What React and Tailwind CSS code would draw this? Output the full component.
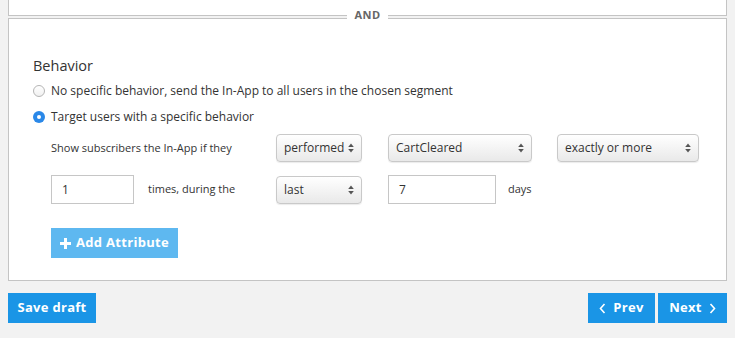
import React from "react";

const Arrows = () => (
  <svg width="6" height="10" viewBox="0 0 6 10" className="shrink-0">
    <polygon points="3,0.5 5.8,4 0.2,4" fill="#555" />
    <polygon points="0.2,6 5.8,6 3,9.5" fill="#555" />
  </svg>
);

const Select = ({ value, className }) => (
  <div
    className={`flex items-center justify-between h-[28px] pl-[7px] pr-[7px] rounded-[4px] border border-[#c9c9c9] bg-gradient-to-b from-[#ffffff] to-[#e9e9e9] shadow-[0_1px_1px_rgba(0,0,0,0.08)] text-[12px] text-[#333] ${className}`}
  >
    <span>{value}</span>
    <Arrows />
  </div>
);

const Input = ({ value, className }) => (
  <div className={`flex items-center h-[29px] pl-[10px] border border-[#c6c6c6] bg-white text-[12px] text-[#333] ${className}`}>
    {value}
  </div>
);

export default function App() {
  return (
    <div
      className="w-[735px] h-[338px] bg-[#f2f2f2] overflow-hidden"
      style={{ fontFamily: '"Open Sans", "Noto Sans", sans-serif' }}
    >
      <div className="relative">
        <div className="ml-[8px] w-[719px] h-[16px] bg-white border-x border-b border-[#c4c4c4]" />
        <div className="h-[2px]" />
        <div className="absolute left-[347px] top-[8px] w-[41px] h-[14px] bg-white flex items-center justify-center text-[11px] font-bold text-[#666] tracking-[0.5px]">
          AND
        </div>
      </div>
      <div className="ml-[8px] w-[719px] h-[263px] bg-white border border-[#c4c4c4] pl-[24px] pt-[37px]">
        <div className="text-[14.5px] leading-[20px] text-[#333]">Behavior</div>
        <div className="mt-[5px] flex items-center h-[20px] text-[12px] text-[#333]">
          <span className="w-[12px] h-[12px] rounded-full border border-[#b5b5b5] bg-gradient-to-b from-white to-[#f0f0f0]" />
          <span className="ml-[6px]">No specific behavior, send the In-App to all users in the chosen segment</span>
        </div>
        <div className="mt-[6px] flex items-center h-[20px] text-[12px] text-[#333]">
          <span className="w-[12px] h-[12px] rounded-full bg-[#2a88e8] flex items-center justify-center">
            <span className="w-[4px] h-[4px] rounded-full bg-white" />
          </span>
          <span className="ml-[6px]">Target users with a specific behavior</span>
        </div>
        <div className="ml-[18px] mt-[7px] flex items-center">
          <div className="w-[225px] text-[11px] text-[#333]">Show subscribers the In-App if they</div>
          <Select value="performed" className="w-[86px]" />
          <Select value="CartCleared" className="w-[144px] ml-[26px]" />
          <Select value="exactly or more" className="w-[142px] ml-[25px]" />
        </div>
        <div className="ml-[18px] mt-[13px] flex items-center">
          <Input value="1" className="w-[83px]" />
          <div className="ml-[14px] w-[128px] text-[11px] text-[#333]">times, during the</div>
          <Select value="last" className="w-[86px]" />
          <Input value="7" className="w-[108px] ml-[26px]" />
          <div className="ml-[12px] text-[11px] text-[#333]">days</div>
        </div>
        <div className="ml-[18px] mt-[24px] w-[127px] h-[30px] bg-[#5eb8f0] flex items-center justify-center gap-[5px] text-white text-[13px] font-bold tracking-[0.3px]">
          <svg width="11" height="11" viewBox="0 0 11 11">
            <rect x="4" y="0" width="3" height="11" fill="white" />
            <rect x="0" y="4" width="11" height="3" fill="white" />
          </svg>
          <span>Add Attribute</span>
        </div>
      </div>
      <div className="mt-[12px] mx-[8px] flex items-center">
        <div className="w-[88px] h-[30px] bg-[#1a95e6] flex items-center justify-center text-white text-[13px] font-bold tracking-[0.3px]">
          Save draft
        </div>
        <div className="ml-auto flex gap-[3px]">
          <div className="w-[67px] h-[30px] bg-[#1a95e6] flex items-center justify-center gap-[7px] text-white text-[13px] font-bold tracking-[0.3px]">
            <svg width="7" height="11" viewBox="0 0 7 11">
              <polyline points="5.5,1 1.5,5.5 5.5,10" fill="none" stroke="white" strokeWidth="1.6" />
            </svg>
            <span>Prev</span>
          </div>
          <div className="w-[69px] h-[30px] bg-[#1a95e6] flex items-center justify-center gap-[7px] text-white text-[13px] font-bold tracking-[0.3px]">
            <span>Next</span>
            <svg width="7" height="11" viewBox="0 0 7 11">
              <polyline points="1.5,1 5.5,5.5 1.5,10" fill="none" stroke="white" strokeWidth="1.6" />
            </svg>
          </div>
        </div>
      </div>
    </div>
  );
}
